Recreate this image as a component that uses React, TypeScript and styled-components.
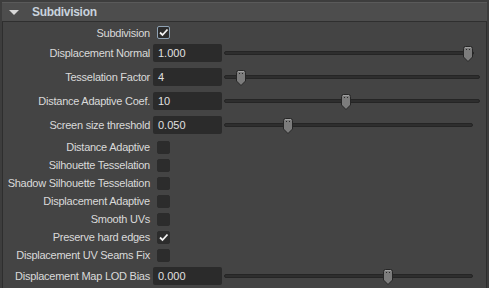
import styled, { createGlobalStyle } from "styled-components";

type Row =
  | { kind: "check"; label: string; checked?: boolean; focused?: boolean }
  | { kind: "slider"; label: string; value: string; pos: number; end?: number };

const rows: Row[] = [
  { kind: "check", label: "Subdivision", checked: true, focused: true },
  { kind: "slider", label: "Displacement Normal", value: "1.000", pos: 468, end: 474 },
  { kind: "slider", label: "Tesselation Factor", value: "4", pos: 241, end: 480 },
  { kind: "slider", label: "Distance Adaptive Coef.", value: "10", pos: 346, end: 480 },
  { kind: "slider", label: "Screen size threshold", value: "0.050", pos: 288, end: 473 },
  { kind: "check", label: "Distance Adaptive" },
  { kind: "check", label: "Silhouette Tesselation" },
  { kind: "check", label: "Shadow Silhouette Tesselation" },
  { kind: "check", label: "Displacement Adaptive" },
  { kind: "check", label: "Smooth UVs" },
  { kind: "check", label: "Preserve hard edges", checked: true },
  { kind: "check", label: "Displacement UV Seams Fix" },
  { kind: "slider", label: "Displacement Map LOD Bias", value: "0.000", pos: 388, end: 473 },
];

const TRACK_START = 224;

export default function App() {
  return (
    <>
      <GlobalStyle />
      <Panel>
        <Header>
          <Arrow />
          <Title>Subdivision</Title>
        </Header>
        <Body>
          {rows.map((row) =>
            row.kind === "check" ? (
              <CheckRow key={row.label}>
                <Label>{row.label}</Label>
                <Box $focused={row.focused}>
                  {row.checked && (
                    <svg width="11" height="11" viewBox="0 0 11 11">
                      <path
                        d="M2 5.5 L4.5 8 L9.5 2.5"
                        fill="none"
                        stroke="#f2f2f2"
                        strokeWidth="1.8"
                      />
                    </svg>
                  )}
                </Box>
              </CheckRow>
            ) : (
              <FieldRow key={row.label}>
                <Label>{row.label}</Label>
                <Field>{row.value}</Field>
                <Slider style={{ width: (row.end ?? 474) - TRACK_START }}>
                  <Track />
                  <Handle style={{ left: row.pos - TRACK_START - 6 }}>
                    <svg width="12" height="16" viewBox="0 0 12 16">
                      <path
                        d="M1.5 2.5 Q1.5 0.5 3.5 0.5 L8.5 0.5 Q10.5 0.5 10.5 2.5 L10.5 11 L6 15.5 L1.5 11 Z"
                        fill="#7c7c7c"
                        stroke="#262626"
                      />
                      <path d="M3 1.5 L9 1.5" stroke="#a0a0a0" />
                      <rect x="4" y="3" width="1" height="1" fill="#2a2a2a" />
                      <rect x="7" y="3" width="1" height="1" fill="#2a2a2a" />
                    </svg>
                  </Handle>
                </Slider>
              </FieldRow>
            )
          )}
        </Body>
      </Panel>
    </>
  );
}

/*
=========== STYLES =================
*/
const GlobalStyle = createGlobalStyle`
  html, body {
    margin: 0;
    background: #3d3d3d;
    font-family: "Liberation Sans", Arial, sans-serif;
  }
`;

const Panel = styled.div`
  width: 489px;
  height: 288px;
  padding: 2px 2px 0 2px;
  box-sizing: border-box;
  overflow: hidden;
  display: flex;
  flex-direction: column;
`;

const Header = styled.div`
  height: 20px;
  flex-shrink: 0;
  box-sizing: border-box;
  background: #4d4d4d;
  border-top: 1px solid #5a5a5a;
  border-bottom: 1px solid #2f2f2f;
  display: flex;
  align-items: center;
  padding-left: 7px;
`;

const Arrow = styled.div`
  width: 0;
  height: 0;
  border-left: 5px solid transparent;
  border-right: 5px solid transparent;
  border-top: 5px solid #d8d8d8;
  margin-right: 13px;
`;

const Title = styled.span`
  font-size: 12px;
  font-weight: bold;
  letter-spacing: -0.3px;
  color: #c9d3dd;
`;

const Body = styled.div`
  flex: 1 0 auto;
  background: #444444;
  border-left: 1px solid #2e2e2e;
  border-right: 1px solid #2e2e2e;
  padding-top: 2px;
  display: flex;
  flex-direction: column;
`;

const Label = styled.div`
  width: 147px;
  text-align: right;
  font-size: 11px;
  letter-spacing: -0.25px;
  color: #dadada;
  white-space: nowrap;
  flex-shrink: 0;
`;

const CheckRow = styled.div`
  height: 18px;
  flex-shrink: 0;
  display: flex;
  align-items: center;
  &:first-child {
    height: 17px;
  }
  &:nth-child(6) {
    margin-top: 1px;
  }
`;

const Box = styled.div<{ $focused?: boolean }>`
  width: 13px;
  height: 13px;
  box-sizing: border-box;
  margin-left: 7px;
  background: #2c2c2c;
  border-radius: 2px;
  border: 1px solid ${(p) => (p.$focused ? "#8fa2b4" : "#2c2c2c")};
  display: flex;
  align-items: center;
  justify-content: center;
`;

const FieldRow = styled.div`
  height: 24px;
  flex-shrink: 0;
  display: flex;
  align-items: center;
`;

const Field = styled.div`
  width: 69px;
  height: 18px;
  box-sizing: border-box;
  margin-left: 3px;
  padding-left: 5px;
  background: #2b2b2b;
  border-radius: 2px;
  font-size: 11px;
  line-height: 18px;
  color: #e0e0e0;
`;

const Slider = styled.div`
  position: relative;
  height: 16px;
  margin-left: 2px;
  display: flex;
  align-items: center;
`;

const Track = styled.div`
  width: 100%;
  height: 4px;
  box-sizing: border-box;
  background: #2e2e2e;
  border: 1px solid #252525;
  border-radius: 2px;
`;

const Handle = styled.div`
  position: absolute;
  top: 1px;
  width: 12px;
  height: 16px;
  svg {
    display: block;
  }
`;
